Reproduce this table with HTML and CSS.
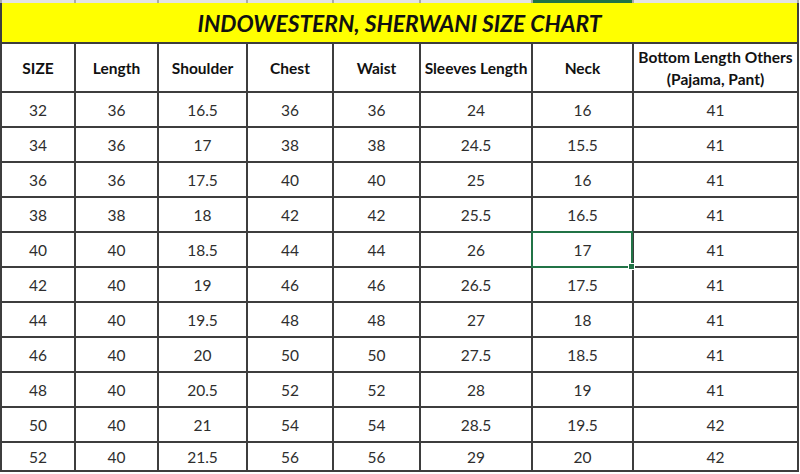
FILE: index.html
```html
<!DOCTYPE html>
<html>
<head>
<meta charset="utf-8">
<link rel="stylesheet" href="styles.css">
</head>
<body>
<div class="colheads">
  <div class="ch"></div><div class="ch"></div><div class="ch"></div><div class="ch"></div>
  <div class="ch"></div><div class="ch"></div><div class="ch active"></div><div class="ch"></div>
</div>
<div class="sheet">
  <div class="title">INDOWESTERN, SHERWANI SIZE CHART</div>
  <div class="hd">SIZE</div><div class="hd">Length</div><div class="hd">Shoulder</div><div class="hd">Chest</div><div class="hd">Waist</div><div class="hd">Sleeves Length</div><div class="hd">Neck</div><div class="hd">Bottom Length Others<br>(Pajama, Pant)</div>
  <div class="c">32</div><div class="c">36</div><div class="c">16.5</div><div class="c">36</div><div class="c">36</div><div class="c">24</div><div class="c">16</div><div class="c">41</div>
  <div class="c">34</div><div class="c">36</div><div class="c">17</div><div class="c">38</div><div class="c">38</div><div class="c">24.5</div><div class="c">15.5</div><div class="c">41</div>
  <div class="c">36</div><div class="c">36</div><div class="c">17.5</div><div class="c">40</div><div class="c">40</div><div class="c">25</div><div class="c">16</div><div class="c">41</div>
  <div class="c">38</div><div class="c">38</div><div class="c">18</div><div class="c">42</div><div class="c">42</div><div class="c">25.5</div><div class="c">16.5</div><div class="c">41</div>
  <div class="c">40</div><div class="c">40</div><div class="c">18.5</div><div class="c">44</div><div class="c">44</div><div class="c">26</div><div class="c sel">17</div><div class="c">41</div>
  <div class="c">42</div><div class="c">40</div><div class="c">19</div><div class="c">46</div><div class="c">46</div><div class="c">26.5</div><div class="c">17.5</div><div class="c">41</div>
  <div class="c">44</div><div class="c">40</div><div class="c">19.5</div><div class="c">48</div><div class="c">48</div><div class="c">27</div><div class="c">18</div><div class="c">41</div>
  <div class="c">46</div><div class="c">40</div><div class="c">20</div><div class="c">50</div><div class="c">50</div><div class="c">27.5</div><div class="c">18.5</div><div class="c">41</div>
  <div class="c">48</div><div class="c">40</div><div class="c">20.5</div><div class="c">52</div><div class="c">52</div><div class="c">28</div><div class="c">19</div><div class="c">41</div>
  <div class="c">50</div><div class="c">40</div><div class="c">21</div><div class="c">54</div><div class="c">54</div><div class="c">28.5</div><div class="c">19.5</div><div class="c">42</div>
  <div class="c">52</div><div class="c">40</div><div class="c">21.5</div><div class="c">56</div><div class="c">56</div><div class="c">29</div><div class="c">20</div><div class="c">42</div>
</div>
</body>
</html>
```
FILE: styles.css
```css
html, body {
  margin: 0;
  padding: 0;
  background: #ffffff;
  font-family: Lato, "Open Sans", sans-serif;
}
body {
  width: 800px;
  height: 474px;
  overflow: hidden;
}
.colheads {
  display: grid;
  grid-template-columns: 72px 81px 87px 84px 85px 110px 99px 163px;
  column-gap: 2px;
  padding: 0 2px;
  width: 795px;
  height: 3px;
  background: #a9a9a9;
}
.ch {
  background: #e3e3e3;
}
.ch.active {
  background: #217346;
}
.sheet {
  display: grid;
  grid-template-columns: 72px 81px 87px 84px 85px 110px 99px 163px;
  grid-template-rows: 39px 47px repeat(10, 33px) 27px;
  gap: 2px;
  padding: 0 2px 2px 2px;
  width: 795px;
  background: #3d3d3d;
}
.title {
  grid-column: 1 / -1;
  background: #ffff00;
  color: #111;
  font-weight: 700;
  font-style: italic;
  font-size: 22.8px;
  display: flex;
  align-items: center;
  justify-content: center;
  padding-top: 1px;
}
.hd {
  background: #fff;
  color: #111;
  font-weight: 700;
  font-size: 15.5px;
  line-height: 22px;
  display: flex;
  align-items: center;
  justify-content: center;
  text-align: center;
}
.c {
  background: #fff;
  color: #2e2e2e;
  font-size: 15.5px;
  display: flex;
  align-items: center;
  justify-content: center;
  position: relative;
}
.sel::after {
  content: "";
  position: absolute;
  left: -2px;
  top: -2px;
  right: -1px;
  bottom: -2px;
  border: 2px solid #217346;
}
.sel::before {
  content: "";
  position: absolute;
  right: -3px;
  bottom: -4px;
  width: 5px;
  height: 5px;
  background: #217346;
  border: 1px solid #fff;
  z-index: 2;
}
```
